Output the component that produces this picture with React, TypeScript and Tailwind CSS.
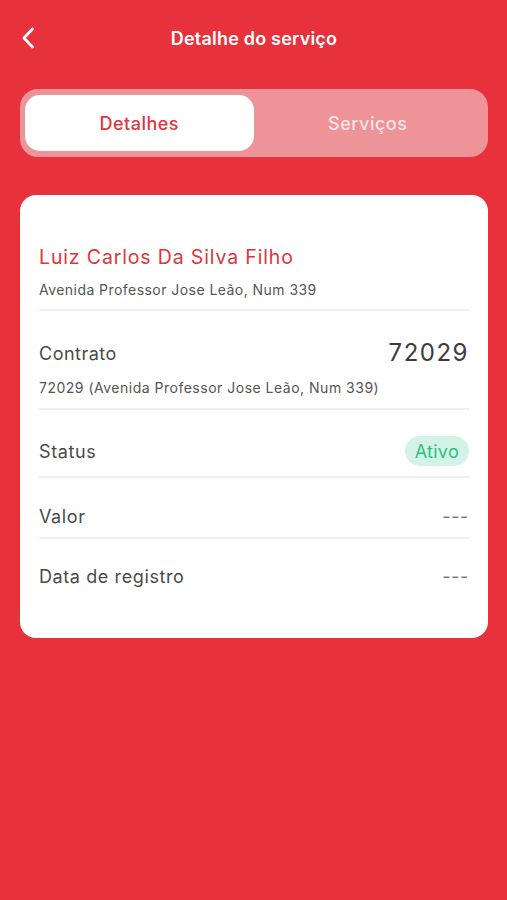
import React from "react";

const font = { fontFamily: "Inter, 'Noto Sans', sans-serif" };

function Divider() {
  return <div className="h-[2px] bg-[#efefef]" />;
}

export default function App() {
  return (
    <div className="min-h-[900px] w-full bg-[#e8323b] pl-[20px] pr-[19px]" style={font}>
      <div className="relative flex h-[77px] items-center justify-center">
        <svg className="absolute left-[1px] top-[27px]" width="14" height="22" viewBox="0 0 14 22" fill="none">
          <path d="M11.5 2 L3 11 L11.5 20" stroke="white" strokeWidth="2.8" strokeLinecap="round" strokeLinejoin="round" />
        </svg>
        <span className="text-[18px] font-semibold text-white tracking-[0.2px]">Detalhe do serviço</span>
      </div>
      <div className="mt-[12px] flex h-[68px] rounded-[18px] bg-[#ee9397] p-[6px] pl-[5px]">
        <div className="flex flex-1 items-center justify-center rounded-[15px] bg-white text-[18px] font-medium tracking-[0.5px] text-[#e0363f]">
          Detalhes
        </div>
        <div className="flex flex-1 items-center justify-center text-[18px] font-medium tracking-[0.5px] text-[#fbe4e5]">
          Serviços
        </div>
      </div>
      <div className="mt-[38px] rounded-[16px] bg-white px-[19px] pt-[50px] pb-[50px]">
        <div className="text-[19.5px] leading-[24px] tracking-[0.85px] text-[#e0343c]">Luiz Carlos Da Silva Filho</div>
        <div className="mt-[11px] mb-[9px] text-[14px] leading-[20px] tracking-[0.45px] text-[#555]">Avenida Professor Jose Leão, Num 339</div>
        <Divider />
        <div className="mt-[27px] mb-[1px] flex h-[30px] items-center justify-between">
          <span className="text-[18px] tracking-[0.5px] text-[#4a4a4a]">Contrato</span>
          <span className="text-[24px] tracking-[1.5px] text-[#3c3c3c]">72029</span>
        </div>
        <div className="mt-[10px] mb-[10px] text-[14px] leading-[20px] tracking-[0.5px] text-[#555]">72029 (Avenida Professor Jose Leão, Num 339)</div>
        <Divider />
        <div className="mt-[26px] mb-[10px] flex h-[30px] items-center justify-between">
          <span className="text-[18px] tracking-[0.6px] text-[#4a4a4a]">Status</span>
          <span className="flex h-[30px] items-center rounded-full bg-[#d3f3e6] px-[10px] text-[18px] tracking-[0.3px] text-[#2fbf84]">Ativo</span>
        </div>
        <Divider />
        <div className="mt-[26px] mb-[9px] flex h-[24px] items-center justify-between">
          <span className="text-[18px] tracking-[0.6px] text-[#4a4a4a]">Valor</span>
          <span className="text-[18px] tracking-[0.6px] text-[#777]">---</span>
        </div>
        <Divider />
        <div className="mt-[25px] flex h-[24px] items-center justify-between">
          <span className="text-[18px] tracking-[0.6px] text-[#4a4a4a]">Data de registro</span>
          <span className="text-[18px] tracking-[0.6px] text-[#777]">---</span>
        </div>
      </div>
    </div>
  );
}
